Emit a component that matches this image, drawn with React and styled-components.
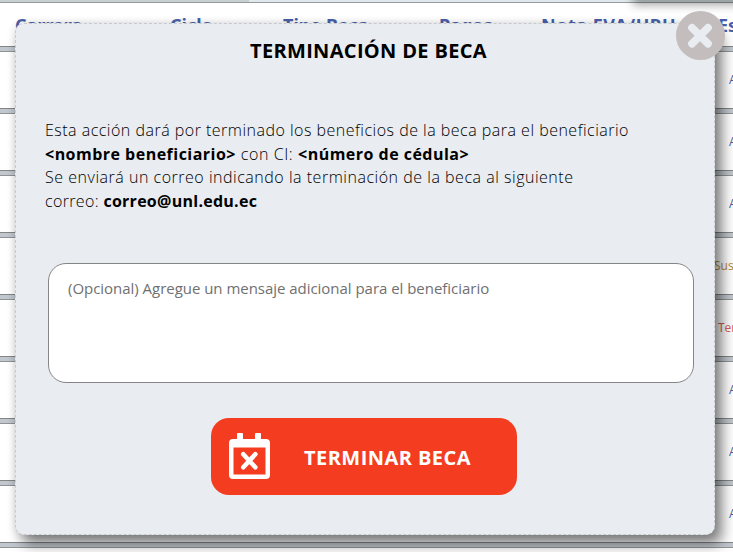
import React from "react";
import styled, { createGlobalStyle } from "styled-components";

const Global = createGlobalStyle`
  * { box-sizing: border-box; }
  body { margin: 0; font-family: "Open Sans", "Noto Sans", sans-serif; background: #fff; }
`;

const Page = styled.div`
  position: relative;
  width: 733px;
  height: 552px;
  overflow: hidden;
  background: #fff;
`;

const TopBand = styled.div`
  display: flex;
  height: 3px;
  background: #dfe8ea;
  border-bottom: 1px solid #979b9d;
`;

const TopTab = styled.div`
  width: 249px;
  background: #c8cfd1;
`;

const TopShadow = styled.div`
  position: absolute;
  top: -20px;
  left: 635px;
  width: 130px;
  height: 20px;
  box-shadow: 0 3px 10px 2px rgba(0, 0, 0, 0.36);
`;

const HeaderRow = styled.div`
  display: grid;
  grid-template-columns: 155px 113px 156px 102px 177px 60px;
  height: 43px;
  padding: 10px 0 0 15px;
  overflow: hidden;
`;

const HeaderCell = styled.span`
  color: #4960a8;
  font: 700 18px/24px "Noto Sans", sans-serif;
  letter-spacing: ${(p) => p.$spacing}px;
  white-space: nowrap;
`;

const Row = styled.div`
  display: flex;
  align-items: center;
  height: 62px;
  padding-left: ${(p) => p.$indent}px;
  border-top: 1px solid #858585;
  background: linear-gradient(#c1c7ce 0 4px, #929394 4px 5px, #fff 5px);
`;

const Status = styled.span`
  padding-top: 4px;
  color: ${(p) => p.$color};
  font-size: 12px;
  line-height: 16px;
  white-space: nowrap;
`;

const Modal = styled.section`
  position: absolute;
  left: 15px;
  top: 23px;
  display: flex;
  flex-direction: column;
  width: 700px;
  height: 512px;
  padding: 13px 21px 0 29px;
  border: 1px dashed #c6c9cd;
  border-radius: 9px;
  background: #e9ecf1;
  box-shadow: 7px 9px 14px rgba(0, 0, 0, 0.5), 0 0 8px rgba(0, 0, 0, 0.12);
`;

const Title = styled.h1`
  align-self: flex-start;
  margin: 0 0 0 205px;
  color: #000;
  font: 700 20px/27px "Open Sans", sans-serif;
  letter-spacing: 0.33px;
  white-space: nowrap;
`;

const Message = styled.div`
  margin-top: 55px;
  color: #000;
  font-size: 16px;
  font-weight: 300;
  line-height: 23.67px;
`;

const Line = styled.div`
  white-space: pre;
  letter-spacing: ${(p) => p.$spacing}px;

  b { font-weight: 700; letter-spacing: ${(p) => p.$bold || 0}px; }
`;

const Note = styled.textarea`
  display: block;
  flex: none;
  width: 646px;
  height: 120px;
  margin: 49px 0 0 3px;
  padding: 13px 19px;
  resize: none;
  border: 1px solid #858585;
  border-radius: 18px;
  background: #fff;
  font: 400 15px/23px "Open Sans", sans-serif;
  letter-spacing: -0.03px;

  &::placeholder { color: #707070; opacity: 1; }
`;

const EndButton = styled.button`
  display: flex;
  align-items: center;
  width: 306px;
  height: 77px;
  margin: 35px 0 0 166px;
  padding: 0 0 0 18px;
  border: 0;
  border-radius: 18px;
  background: #f43d20;
  color: #fff;
  font: 700 20px/28px "Open Sans", sans-serif;
  white-space: nowrap;

  svg { flex: none; margin-right: 33px; }
  span { letter-spacing: 0.45px; padding-top: 4px; }
`;

const CloseButton = styled.button`
  position: absolute;
  left: 676px;
  top: 11px;
  width: 49px;
  height: 49px;
  padding: 0;
  border: 0;
  border-radius: 50%;
  background: #c3bdbd;

  svg { display: block; }
`;

const columns = [
  { label: "Carrera", spacing: 0 },
  { label: "Ciclo", spacing: 0 },
  { label: "Tipo Beca", spacing: 0 },
  { label: "Pagos", spacing: 0 },
  { label: "Nota EVA/URU", spacing: 0.5 },
  { label: "Estado", spacing: 0 },
];

const active = { label: "Activo", color: "#4960a8", indent: 729 };
const rows = [
  active,
  active,
  active,
  { label: "Suspendido", color: "#b58a35", indent: 714 },
  { label: "Terminado", color: "#d85c5c", indent: 718 },
  active,
  active,
  active,
  { label: "", color: "#4960a8", indent: 0 },
];

function CalendarX() {
  return (
    <svg width="42" height="48" viewBox="0 0 42 48" aria-hidden="true">
      <path
        fill="#fff"
        fillRule="evenodd"
        d="M8 7V2q0-1 1-1h4q1 0 1 1v5h12V2q0-1 1-1h4q1 0 1 1v5h5q4 0 4 4v32q0 4-4 4H4q-4 0-4-4V11q0-4 4-4zM4.5 15.5v27h32v-27z"
      />
      <path stroke="#fff" strokeWidth="4.6" strokeLinecap="round" d="m14.3 22.3 12 13m0-13-12 13" />
    </svg>
  );
}

export default function App() {
  return (
    <Page>
      <Global />
      <TopBand><TopTab /></TopBand>
      <HeaderRow>
        {columns.map((c) => <HeaderCell key={c.label} $spacing={c.spacing}>{c.label}</HeaderCell>)}
      </HeaderRow>
      {rows.map((r, i) => (
        <Row key={i} $indent={r.indent}><Status $color={r.color}>{r.label}</Status></Row>
      ))}
      <TopShadow />
      <Modal role="dialog">
        <Title>TERMINACIÓN DE BECA</Title>
        <Message>
          <Line $spacing={0.49}>Esta acción dará por terminado los beneficios de la beca para el beneficiario</Line>
          <Line $spacing={0.6} $bold={0.48}><b>&lt;nombre beneficiario&gt;</b> con CI: <b>&lt;número de cédula&gt;</b></Line>
          <Line $spacing={0.52}>Se enviará un correo indicando la terminación de la beca al siguiente</Line>
          <Line $spacing={0.35} $bold={0.27}>correo: <b>correo@unl.edu.ec</b></Line>
        </Message>
        <Note placeholder="(Opcional) Agregue un mensaje adicional para el beneficiario" />
        <EndButton><CalendarX /><span>TERMINAR BECA</span></EndButton>
      </Modal>
      <CloseButton aria-label="Cerrar">
        <svg width="49" height="49" viewBox="0 0 49 49">
          <path stroke="#e9ecf1" strokeWidth="7.6" strokeLinecap="round" d="m16 16.8 16 16m0-16-16 16" />
          <path stroke="#e9ecf1" strokeWidth="6.4" d="m14 14.8 20 20m0-20-20 20" />
        </svg>
      </CloseButton>
    </Page>
  );
}
